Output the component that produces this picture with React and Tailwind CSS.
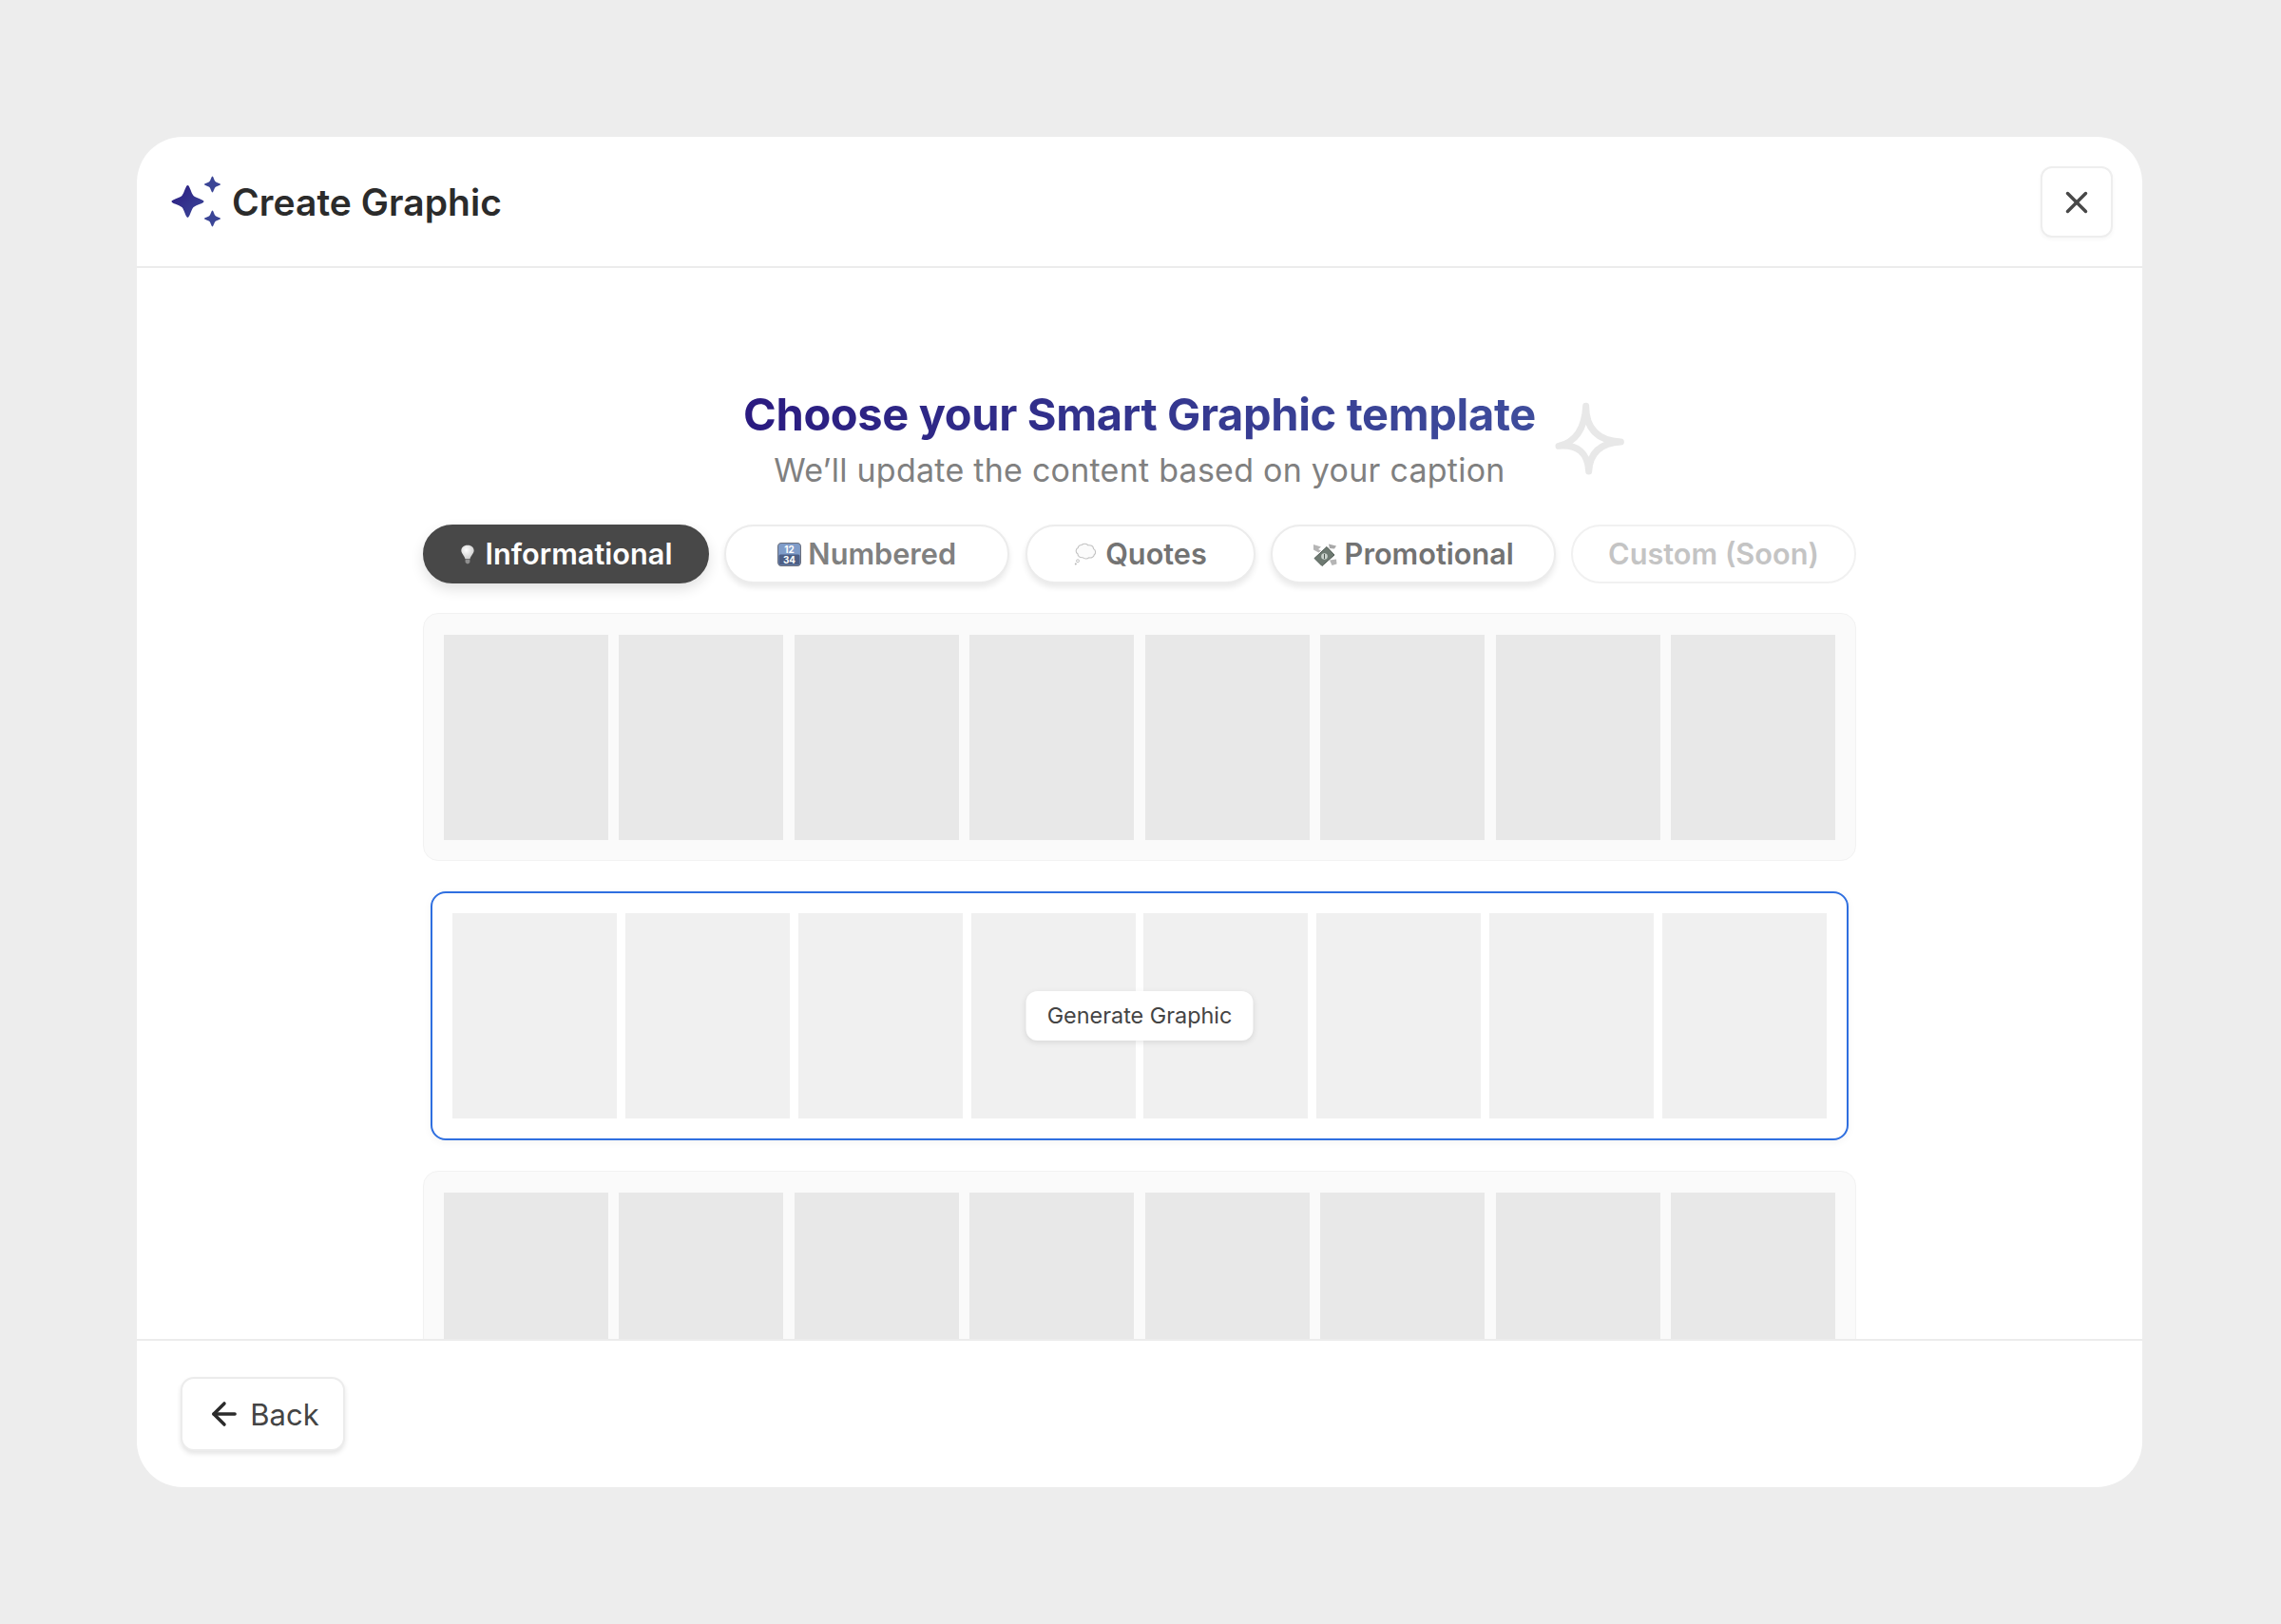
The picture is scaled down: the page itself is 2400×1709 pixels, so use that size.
import React from "react";
import { X, ArrowLeft } from "lucide-react";

const star = (cx, cy, r) => {
  const k = r * 0.36;
  return `M${cx} ${cy - r}C${cx + k * 0.35} ${cy - r} ${cx + k * 0.55} ${cy - k * 1.5} ${cx + k} ${cy - k}C${cx + k * 1.5} ${cy - k * 0.55} ${cx + r} ${cy - k * 0.35} ${cx + r} ${cy}C${cx + r} ${cy + k * 0.35} ${cx + k * 1.5} ${cy + k * 0.55} ${cx + k} ${cy + k}C${cx + k * 0.55} ${cy + k * 1.5} ${cx + k * 0.35} ${cy + r} ${cx} ${cy + r}C${cx - k * 0.35} ${cy + r} ${cx - k * 0.55} ${cy + k * 1.5} ${cx - k} ${cy + k}C${cx - k * 1.5} ${cy + k * 0.55} ${cx - r} ${cy + k * 0.35} ${cx - r} ${cy}C${cx - r} ${cy - k * 0.35} ${cx - k * 1.5} ${cy - k * 0.55} ${cx - k} ${cy - k}C${cx - k * 0.55} ${cy - k * 1.5} ${cx - k * 0.35} ${cy - r} ${cx} ${cy - r}Z`;
};

const Logo = () => (
  <svg width="54" height="54" viewBox="0 0 54 54" className="shrink-0">
    <defs>
      <linearGradient id="lg" x1="0" y1="0" x2="1" y2="1">
        <stop offset="0" stopColor="#2a1a80" />
        <stop offset="1" stopColor="#3d4a9a" />
      </linearGradient>
    </defs>
    <path d={star(18.500, 27, 17)} fill="url(#lg)" />
    <path d={star(44.500, 9, 8.500)} fill="#3b4596" />
    <path d={star(44.500, 45, 8.500)} fill="#3b4596" />
  </svg>
);

const Bulb = () => (
  <svg width="16" height="25" viewBox="0 0 18 24">
    <defs>
      <radialGradient id="bulb" cx="0.4" cy="0.35" r="0.7">
        <stop offset="0" stopColor="#ffffff" />
        <stop offset="1" stopColor="#c9c9c9" />
      </radialGradient>
    </defs>
    <path d="M9 1C4.200 1 1.500 4 1.500 7.400c0 3.400 3.700 5.600 4.700 10h5.600C12.800 13 16.500 10.800 16.500 7.400 16.500 4 13.800 1 9 1Z" fill="url(#bulb)" />
    <path d="M6.300 18h5.400v3.200L10 23H8l-1.700-1.800Z" fill="#8f8f8f" />
  </svg>
);

const Keypad = () => (
  <svg width="25" height="25" viewBox="0 0 24 24">
    <rect x="0.500" y="0.500" width="23" height="23" rx="3.500" fill="#7f9cc9" stroke="#6b6f7c" strokeWidth="1" />
    <rect x="1.500" y="12" width="21" height="10.500" rx="1.500" fill="#4d5f86" />
    <text x="12" y="10.800" textAnchor="middle" fontSize="9.500" fontWeight="700" fill="#fff" fontFamily="Inter, sans-serif">12</text>
    <text x="12" y="20.800" textAnchor="middle" fontSize="9.500" fontWeight="700" fill="#fff" fontFamily="Inter, sans-serif">34</text>
  </svg>
);

const Thought = () => (
  <svg width="26" height="24" viewBox="0 0 26 24">
    <path d="M9 2.500c2.200-1.800 5.500-1.500 7 .3 3.200-.6 5.600 1.300 5.500 3.700 2.600 1.300 2.800 4.800.8 6.300-.4 2.500-3.200 3.800-5.400 3-2 1.500-5 1.400-6.700-.1-2.800.3-5.400-1.300-5.200-3.800C2.500 10.500 2.500 6.800 5.200 5.600 5.500 3.700 7 2.500 9 2.500Z" fill="#fbfbfb" stroke="#c2c2c2" strokeWidth="1.100" />
    <circle cx="5" cy="19.300" r="1.500" fill="#fafafa" stroke="#b5b5b5" strokeWidth=".8" />
    <circle cx="2.800" cy="22.600" r="1" fill="#b5b5b5" />
  </svg>
);

const Money = () => (
  <svg width="26" height="25" viewBox="0 0 26 24">
    <path d="M1 1.500l8 2.500-3 2.500 3 1.500-2.500 2L1 7Z" fill="#b5b5b5" />
    <path d="M17 1l8 2-2 3-5-.5Z" fill="#a8a8a8" />
    <path d="M2 16L15 4l8 8.500L10 24Z" fill="#6e7a72" stroke="#4f5a53" strokeWidth="1" />
    <circle cx="12.500" cy="14" r="3.300" fill="#c9d1cb" />
    <path d="M12.500 11.500v5" stroke="#4f5a53" strokeWidth="1" />
    <path d="M18 18l7-1 .5 5-5 1.500Z" fill="#b5b5b5" />
  </svg>
);

const tabs = [
  { label: "Informational", icon: <Bulb />, w: "w-[301px] gap-[11px]", style: "bg-[#484848] text-white border-[#484848] shadow-[0_6px_14px_rgba(0,0,0,0.12)]" },
  { label: "Numbered", icon: <Keypad />, w: "w-[300px] gap-[7px]", style: "bg-white text-[#808080] border-[#ececec] shadow-[0_4px_6px_rgba(0,0,0,0.09)]" },
  { label: "Quotes", icon: <Thought />, w: "w-[242px] gap-[8px]", style: "bg-white text-[#737373] border-[#ececec] shadow-[0_4px_6px_rgba(0,0,0,0.09)]" },
  { label: "Promotional", icon: <Money />, w: "w-[300px] gap-[8px]", style: "bg-white text-[#737373] border-[#ececec] shadow-[0_4px_6px_rgba(0,0,0,0.09)]" },
  { label: "Custom (Soon)", icon: null, w: "w-[300px]", style: "bg-white text-[#c4c4c4] border-[#f1f1f1]" },
];

const Thumbs = ({ color }) => (
  <div className="flex justify-between">
    {Array.from({ length: 8 }).map((_, i) => (
      <div key={i} className={`h-[216px] w-[173px] shrink-0 ${color}`} />
    ))}
  </div>
);

const GrayRow = () => (
  <div className="w-[1508px] shrink-0 rounded-[16px] border border-[#f2f2f2] bg-[#fafafa] px-[21px] pt-[22px] pb-[21px]">
    <Thumbs color="bg-[#e8e8e8]" />
  </div>
);

export default function App() {
  return (
    <div className="h-[1709px] w-full bg-[#ededed] pl-[144px] pt-[144px] font-['Inter',sans-serif]">
      <div className="flex h-[1421px] w-[2110px] flex-col overflow-hidden rounded-[48px] bg-white">
        <header className="flex h-[138px] shrink-0 items-center justify-between border-b-2 border-[#ececec] pl-[35px] pr-[31px]">
          <div className="flex items-center gap-[11px]">
            <Logo />
            <span className="text-[39px] font-semibold leading-none tracking-[0.05px] text-[#2b2b2b]">Create Graphic</span>
          </div>
          <button className="mt-[1px] flex h-[75px] w-[76px] items-center justify-center rounded-[12px] border-2 border-[#eeeeee] bg-white shadow-[0_2px_4px_rgba(0,0,0,0.04)]">
            <X size={38} strokeWidth={2.2} className="text-[#484848]" />
          </button>
        </header>

        <main className="flex min-h-0 flex-1 flex-col items-center overflow-hidden pt-[124px]">
          <div className="relative flex flex-col items-center">
            <h1 className="bg-gradient-to-r from-[#2a1a80] to-[#3f4d9c] bg-clip-text text-[47px] font-bold leading-[60px] tracking-[-0.35px] text-transparent">
              Choose your Smart Graphic template
            </h1>
            <p className="text-[34px] font-normal leading-[58px] tracking-[0.25px] text-[#808080]">
              We’ll update the content based on your caption
            </p>
            <svg width="110" height="105" viewBox="0 0 330 315" className="absolute left-[838px] top-[4px]">
              <path
                d="M146 52Q146 160 256 165Q160 170 155 258Q150 170 60 178Q140 160 146 52Z"
                fill="none"
                stroke="#e8e8e8"
                strokeWidth="21"
                strokeLinejoin="round"
              />
            </svg>
          </div>

          <div className="mt-[28px] flex w-[1508px] justify-between">
            {tabs.map((t) => (
              <button
                key={t.label}
                className={`flex h-[62px] items-center justify-center rounded-full border-2 text-[30.700px] font-semibold leading-none ${t.w} ${t.style}`}
              >
                {t.icon}
                <span>{t.label}</span>
              </button>
            ))}
          </div>

          <div className="mt-[31px] flex flex-col items-center gap-[32px]">
            <GrayRow />
            <div className="relative w-[1492px] shrink-0 rounded-[16px] border-2 border-[#2f6fe0] bg-white p-[21px] shadow-[0_2px_8px_rgba(0,0,0,0.05)]">
              <Thumbs color="bg-[#f0f0f0]" />
              <button className="absolute left-1/2 top-1/2 flex h-[52px] w-[239px] -translate-x-1/2 -translate-y-1/2 items-center justify-center rounded-[12px] bg-white text-[23.400px] font-normal leading-none text-[#444444] shadow-[0_2px_6px_rgba(0,0,0,0.1)]">
                Generate Graphic
              </button>
            </div>
            <GrayRow />
          </div>
        </main>

        <footer className="flex h-[156px] shrink-0 items-center border-t-2 border-[#ececec] pl-[46px]">
          <button className="flex h-[78px] w-[173px] items-center justify-center gap-[8px] rounded-[14px] border-2 border-[#ececec] bg-white text-[31px] font-normal leading-none text-[#444444] shadow-[0_3px_5px_rgba(0,0,0,0.1)]">
            <ArrowLeft size={38} strokeWidth={2.2} className="text-[#2b2b2b]" />
            <span>Back</span>
          </button>
        </footer>
      </div>
    </div>
  );
}
